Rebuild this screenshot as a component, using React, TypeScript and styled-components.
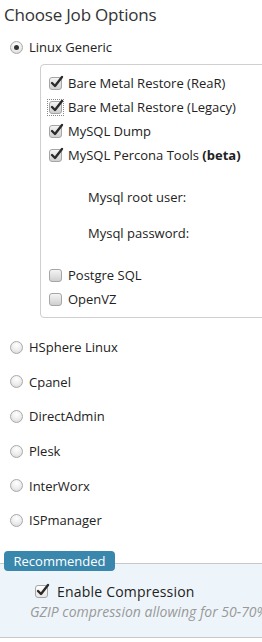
import React from "react";
import styled, { createGlobalStyle } from "styled-components";

const Global = createGlobalStyle`
  html, body { margin: 0; padding: 0; background: #fff; overflow: hidden; }
  body { font-family: "Open Sans", "Noto Sans", sans-serif; color: #333; }
`;

const Page = styled.div`
  width: 262px;
  height: 642px;
  overflow: hidden;
`;

const Title = styled.h2`
  margin: 0;
  padding-left: 4px;
  height: 30px;
  line-height: 30px;
  font-size: 17px;
  letter-spacing: -0.2px;
  font-weight: 400;
  color: #333;
`;

const RadioRow = styled.label<{ $h?: number }>`
  display: flex;
  align-items: center;
  height: ${(p) => p.$h ?? 34.6}px;
  padding-left: 10px;
  font-size: 13px;
  color: #222;
  gap: 6px;
`;

const RadioDot = styled.span<{ $on?: boolean }>`
  width: 13px;
  height: 13px;
  border-radius: 50%;
  box-sizing: border-box;
  border: 1px solid #a9a9a9;
  background: radial-gradient(circle at 50% 30%, #ffffff 0%, #ececec 55%, #d2d2d2 100%);
  display: flex;
  align-items: center;
  justify-content: center;
  &::after {
    content: "";
    display: ${(p) => (p.$on ? "block" : "none")};
    width: 5px;
    height: 5px;
    border-radius: 50%;
    background: #333;
  }
`;

const Panel = styled.div`
  margin-left: 40px;
  margin-right: -10px;
  border: 1px solid #cfcfcf;
  border-radius: 4px;
  padding: 6px 0 6px 8px;
`;

const CheckRow = styled.label`
  display: flex;
  align-items: center;
  height: 24px;
  gap: 6px;
  font-size: 13px;
  color: #222;
  & b { font-weight: 700; }
`;

const BoxWrap = styled.span<{ $focus?: boolean }>`
  display: inline-flex;
  padding: 1px;
  margin: -1px;
  outline: ${(p) => (p.$focus ? "1px dotted #888" : "none")};
`;

const Box = styled.span<{ $light?: boolean }>`
  position: relative;
  width: 13px;
  height: 13px;
  box-sizing: border-box;
  border: 1px solid #a5a5a5;
  border-radius: 3px;
  background: ${(p) =>
    p.$light
      ? "linear-gradient(#ffffff, #e8e8e8)"
      : "linear-gradient(#f4f4f4, #cfcfcf)"};
  & svg { position: absolute; left: 0; top: -3px; }
`;

const Check = ({ on, focus, light }: { on?: boolean; focus?: boolean; light?: boolean }) => (
  <BoxWrap $focus={focus}>
    <Box $light={light}>
      {on && (
        <svg width="14" height="14" viewBox="0 0 14 14">
          <path d="M2 8 L5 11 L12 2" fill="none" stroke="#2b2b2b" strokeWidth="2.4" strokeLinecap="round" strokeLinejoin="round" />
        </svg>
      )}
    </Box>
  </BoxWrap>
);

const FieldBlock = styled.div`
  margin: 12px 0;
  padding-left: 39px;
`;

const FieldRow = styled.div`
  height: 36px;
  display: flex;
  align-items: center;
  font-size: 13px;
  color: #222;
`;

const Options = styled.div`
  margin-top: 12px;
`;

const Recommended = styled.section`
  position: relative;
  margin-top: 25px;
  border-top: 1px solid #c8c8c8;
  border-bottom: 1px solid #c8c8c8;
  background: #eef5fa;
  height: 75px;
  box-sizing: border-box;
  padding: 18px 0 0 35px;
`;

const Badge = styled.span`
  position: absolute;
  left: 4px;
  top: -13px;
  width: 111px;
  height: 20px;
  border-radius: 4px;
  background: #3a87ad;
  color: #fff;
  font-size: 13px;
  line-height: 20px;
  text-align: center;
`;

const CompRow = styled.label`
  display: flex;
  align-items: center;
  gap: 9px;
  height: 20px;
  font-size: 14px;
  color: #222;
  letter-spacing: 0.2px;
`;

const Hint = styled.div`
  margin-left: -5px;
  font-size: 14px;
  font-style: italic;
  color: #999;
  white-space: nowrap;
  line-height: 20px;
`;

const others = ["HSphere Linux", "Cpanel", "DirectAdmin", "Plesk", "InterWorx", "ISPmanager"];

export default function App() {
  return (
    <Page>
      <Global />
      <Title>Choose Job Options</Title>
      <RadioRow $h={34}>
        <RadioDot $on />
        Linux Generic
      </RadioRow>
      <Panel>
        <CheckRow><Check on />Bare Metal Restore (ReaR)</CheckRow>
        <CheckRow><Check on focus />Bare Metal Restore (Legacy)</CheckRow>
        <CheckRow><Check on />MySQL Dump</CheckRow>
        <CheckRow><Check on /><span>MySQL Percona Tools <b>(beta)</b></span></CheckRow>
        <FieldBlock>
          <FieldRow>Mysql root user:</FieldRow>
          <FieldRow>Mysql password:</FieldRow>
        </FieldBlock>
        <CheckRow><Check />Postgre SQL</CheckRow>
        <CheckRow><Check />OpenVZ</CheckRow>
      </Panel>
      <Options>
        {others.map((o) => (
          <RadioRow key={o}>
            <RadioDot />
            {o}
          </RadioRow>
        ))}
      </Options>
      <Recommended>
        <Badge>Recommended</Badge>
        <CompRow><Check on light />Enable Compression</CompRow>
        <Hint>GZIP compression allowing for 50-70% reduction</Hint>
      </Recommended>
    </Page>
  );
}
